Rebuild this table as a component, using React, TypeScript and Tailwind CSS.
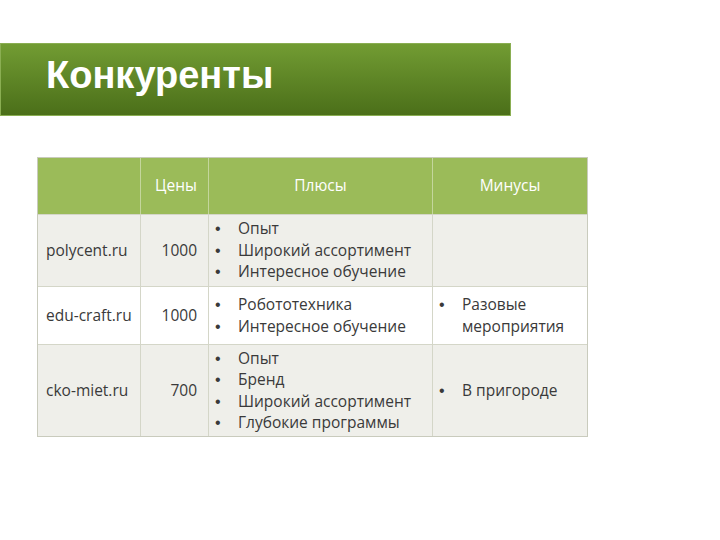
import React from 'react';

interface Row {
  site: string;
  price: string;
  plus: string[];
  minus: string[];
  height: string;
  shade: boolean;
}

const rows: Row[] = [
  { site: 'polycent.ru', price: '1000', plus: ['Опыт', 'Широкий ассортимент', 'Интересное обучение'], minus: [], height: 'h-[72px]', shade: true },
  { site: 'edu-craft.ru', price: '1000', plus: ['Робототехника', 'Интересное обучение'], minus: ['Разовые мероприятия'], height: 'h-[58px]', shade: false },
  { site: 'cko-miet.ru', price: '700', plus: ['Опыт', 'Бренд', 'Широкий ассортимент', 'Глубокие программы'], minus: ['В пригороде'], height: 'h-[92px]', shade: true },
];

const Bullets: React.FC<{ items: string[]; wide?: boolean }> = ({ items, wide }) => (
  <ul className="flex flex-col">
    {items.map(item => (
      <li key={item} className="flex leading-[21.5px]">
        <span className="w-[29px] shrink-0 pl-[6px] font-['Liberation_Sans'] text-[16px]">•</span>
        <span className={wide ? 'w-[110px]' : ''}>{item}</span>
      </li>
    ))}
  </ul>
);

const App: React.FC = () => {
  return (
    <div className="w-[720px] h-[540px] bg-white relative" style={{ fontFamily: '"Open Sans", Arial, sans-serif' }}>
      <div className="h-[43px]" />
      {/* Title bar */}
      <div className="w-[511px] h-[73px] bg-gradient-to-b from-[#729c33] to-[#4b6f19] border border-[#8aae52] flex items-center pl-[45px]">
        <h1 className="text-white font-bold text-[38px] leading-none -mt-[10px]" style={{ fontFamily: '"Liberation Sans", Arial, sans-serif' }}>Конкуренты</h1>
      </div>

      {/* Table */}
      <div className="ml-[37px] mt-[41px] w-[551px] border border-[#c9cbbd] text-[15.5px] text-[#3a3a3a]">
        <div className="grid grid-cols-[103px_68px_224px_154px] h-[56px] bg-[#9bbb59] text-white font-medium">
          <div className="border-r border-[#c4d69c]" />
          <div className="border-r border-[#c4d69c] flex items-center justify-center pl-[3px]">Цены</div>
          <div className="border-r border-[#c4d69c] flex items-center justify-center">Плюсы</div>
          <div className="flex items-center justify-center">Минусы</div>
        </div>
        {rows.map(r => (
          <div
            key={r.site}
            className={`grid grid-cols-[103px_68px_224px_154px] border-t border-[#d4d6c8] ${r.height} ${r.shade ? 'bg-[#efefea]' : 'bg-white'}`}
          >
            <div className="border-r border-[#d4d6c8] flex items-center pl-[8px]">{r.site}</div>
            <div className="border-r border-[#d4d6c8] flex items-center justify-end pr-[11px]">{r.price}</div>
            <div className="border-r border-[#d4d6c8] flex items-center">
              <Bullets items={r.plus} />
            </div>
            <div className="flex items-center">
              {r.minus.length > 0 && <Bullets items={r.minus} wide />}
            </div>
          </div>
        ))}
      </div>
    </div>
  );
};

export default App;
